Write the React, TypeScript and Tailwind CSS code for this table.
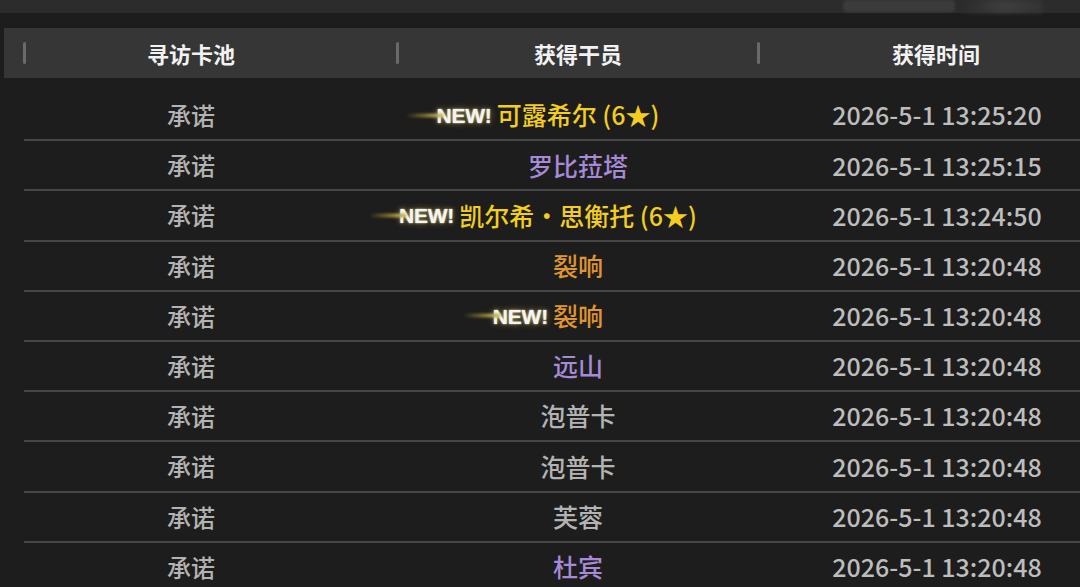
import React from "react";

type Row = { name: string; color: string; isNew?: boolean; time: string };

const rows: Row[] = [
  { name: "可露希尔 (6★)", color: "text-[#f3cd1f]", isNew: true, time: "2026-5-1 13:25:20" },
  { name: "罗比菈塔", color: "text-[#a68ad8]", time: "2026-5-1 13:25:15" },
  { name: "凯尔希・思衡托 (6★)", color: "text-[#f3cd1f]", isNew: true, time: "2026-5-1 13:24:50" },
  { name: "裂响", color: "text-[#e0962f]", time: "2026-5-1 13:20:48" },
  { name: "裂响", color: "text-[#e0962f]", isNew: true, time: "2026-5-1 13:20:48" },
  { name: "远山", color: "text-[#a68ad8]", time: "2026-5-1 13:20:48" },
  { name: "泡普卡", color: "text-[#b3b3b3]", time: "2026-5-1 13:20:48" },
  { name: "泡普卡", color: "text-[#b3b3b3]", time: "2026-5-1 13:20:48" },
  { name: "芙蓉", color: "text-[#b3b3b3]", time: "2026-5-1 13:20:48" },
  { name: "杜宾", color: "text-[#a68ad8]", time: "2026-5-1 13:20:48" },
];

const font = { fontFamily: '"Noto Sans CJK SC", "Noto Sans", sans-serif' };

function NewBadge() {
  return (
    <span className="absolute right-full top-1/2 -translate-y-1/2 mr-[5px] flex items-center pointer-events-none">
      <span className="w-[38px] h-[4px] -mr-[8px] rounded-full bg-gradient-to-r from-transparent via-[#7a6c28] to-[#d8cc70] blur-[1px]" />
      <span
        className="text-[21px] font-bold tracking-[-0.2px] text-[#f4f4f4] leading-none [text-shadow:0_0_2px_rgba(255,250,200,0.9),0_0_6px_rgba(255,220,80,0.55)]"
        style={{ fontFamily: '"Liberation Sans", Arial, sans-serif' }}
      >
        NEW!
      </span>
    </span>
  );
}

function Sep() {
  return <div className="w-[3px] h-[22px] bg-[#6a6a6a] rounded-sm shrink-0" />;
}

export default function App() {
  return (
    <div className="w-[1080px] h-[587px] overflow-hidden bg-[#1d1d1d] flex flex-col" style={font}>
      {/* top strip */}
      <div className="h-[13px] bg-[#2c2c2c] flex items-start shrink-0">
        <div className="ml-[843px] w-[112px] h-[12px] rounded-[4px] bg-[#3b3b3b] blur-[1px]" />
        <div className="ml-[8px] w-[80px] h-[13px] bg-gradient-to-r from-[#2c2c2c] via-[#3e3e3e] to-[#333333] blur-[2px]" />
      </div>
      <div className="h-[15px] shrink-0" />
      {/* header */}
      <div className="h-[50px] ml-[4px] bg-[#363636] flex items-center shrink-0 text-[#f2f2f2] text-[22px] font-bold">
        <div className="w-[19px] shrink-0" />
        <Sep />
        <div className="w-[370px] pr-[40px] text-center shrink-0">寻访卡池</div>
        <Sep />
        <div className="w-[358px] text-center shrink-0">获得干员</div>
        <Sep />
        <div className="flex-1 pl-[32px] text-center">获得时间</div>
      </div>
      <div className="h-[13px] shrink-0" />
      {/* rows */}
      <div className="ml-[24px] flex flex-col">
        {rows.map((r, i) => (
          <div
            key={i}
            className="h-[50.2px] shrink-0 border-b-2 border-[#474747] grid grid-cols-[334px_440px_1fr] items-center text-[25px] font-medium"
          >
            <div className="text-center text-[#b3b3b3] text-[24px]">承诺</div>
            <div className="text-center">
              <span className={`relative inline-block ${r.color}`}>
                {r.isNew && <NewBadge />}
                {r.name}
              </span>
            </div>
            <div className="text-center pr-[4px] text-[#bdbdbd] text-[25px]">{r.time}</div>
          </div>
        ))}
      </div>
    </div>
  );
}
